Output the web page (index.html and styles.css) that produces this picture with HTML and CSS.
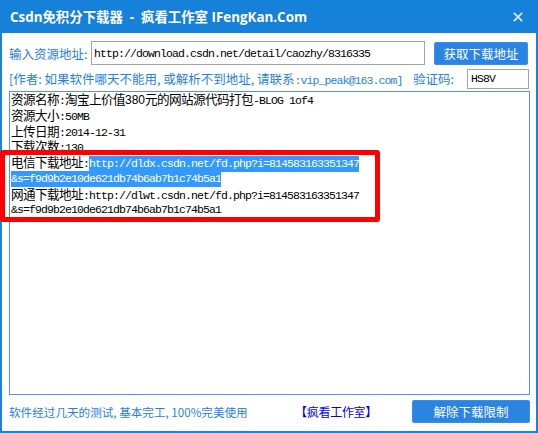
FILE: index.html
```html
<!DOCTYPE html>
<html>
<head>
<meta charset="utf-8">
<link rel="stylesheet" href="styles.css">
</head>
<body>
<div class="window">
  <div class="titlebar">
    <span class="title">Csdn免积分下载器&nbsp; - &nbsp;疯看工作室 IFengKan.Com</span>
    <svg class="close" width="10" height="10" viewBox="0 0 10 10"><path d="M0.8 0.8 L9.2 9.2 M9.2 0.8 L0.8 9.2" stroke="#dbe9f8" stroke-width="1.7" fill="none"/></svg>
  </div>
  <div class="content">
    <div class="row1">
      <span class="label">输入资源地址:</span>
      <div class="input url">http://download.csdn.net/detail/caozhy/8316335</div>
      <button class="btn get">获取下载地址</button>
    </div>
    <div class="row2">
      <span class="author">[作者: 如果软件哪天不能用, 或解析不到地址, 请联系<span class="mono">:vip_peak@163.com]</span></span>
      <span class="vlabel">验证码:</span>
      <div class="input code">HS8V</div>
    </div>
    <div class="textarea">
      <div class="line"><span class="c">资源名称</span><span>:</span><span class="c">淘宝上价值</span><span class="num">380</span><span class="c">元的网站源代码打包</span><span>-BLOG 1of4</span></div>
      <div class="line"><span class="c">资源大小</span><span>:50MB</span></div>
      <div class="line"><span class="c">上传日期</span><span>:2014-12-31</span></div>
      <div class="line"><span class="c">下载次数</span><span>:130</span></div>
      <div class="line"><span class="c">电信下载地址</span><span>:</span><span class="sel">http://dldx.csdn.net/fd.php?i=814583163351347</span></div>
      <div class="line"><span class="sel">&amp;s=f9d9b2e10de621db74b6ab7b1c74b5a1</span></div>
      <div class="line"><span class="c">网通下载地址</span><span>:http://dlwt.csdn.net/fd.php?i=814583163351347</span></div>
      <div class="line"><span>&amp;s=f9d9b2e10de621db74b6ab7b1c74b5a1</span></div>
    </div>
    <div class="footer">
      <span class="tip">软件经过几天的测试, 基本完工, 100%完美使用</span>
      <span class="studio">【疯看工作室】</span>
      <button class="btn unlock">解除下载限制</button>
    </div>
  </div>
  <div class="redbox"></div>
</div>
</body>
</html>
```

FILE: styles.css
```css
html, body {
  margin: 0;
  padding: 0;
  background: #ffffff;
}

.window {
  position: relative;
  width: 538px;
  height: 433px;
  display: flex;
  flex-direction: column;
  font-family: "Noto Sans CJK SC", sans-serif;
}

.titlebar {
  height: 33px;
  background: #1681d8;
  display: flex;
  align-items: center;
  justify-content: space-between;
  padding: 0 15px 0 10px;
  box-sizing: border-box;
  flex: none;
}

.title {
  color: #ffffff;
  font-family: "Open Sans", "Noto Sans CJK SC", sans-serif;
  font-weight: bold;
  font-size: 13.4px;
  line-height: 16px;
  white-space: pre;
}

.close {
  display: block;
}

.content {
  flex: 1;
  border: 2px solid #1d82dc;
  border-top: none;
  padding: 8px 6px 0 7px;
  display: flex;
  flex-direction: column;
}

.row1 {
  display: flex;
  align-items: center;
  height: 24px;
}

.label, .author, .vlabel, .tip {
  color: #1f80e6;
  font-size: 12.5px;
  white-space: pre;
}

.label {
  width: 82px;
}

.input {
  box-sizing: border-box;
  border: 1px solid #a3a3a3;
  background: #fff;
  font-family: "Liberation Mono", monospace;
  font-size: 11.5px;
  letter-spacing: -0.9px;
  color: #000;
  white-space: pre;
  display: flex;
  align-items: center;
}

.url {
  width: 334px;
  height: 24px;
  padding-left: 2px;
}

.btn {
  border: none;
  border-radius: 3px;
  background: #2a85e2;
  color: #ffffff;
  font-family: "Noto Sans CJK SC", sans-serif;
  font-size: 12.5px;
  padding: 0;
  box-shadow: inset 0 0 0 1px #3a8fe6;
}

.get {
  width: 94px;
  height: 23px;
  margin-left: 9px;
}

.row2 {
  display: flex;
  align-items: center;
  height: 19px;
  margin-top: 4px;
}

.mono {
  font-family: "Liberation Mono", monospace;
  font-size: 11.5px;
  letter-spacing: -0.9px;
}

.vlabel {
  margin-left: auto;
  width: 54px;
}

.code {
  width: 62px;
  height: 20px;
  padding-left: 3px;
  margin-right: 1px;
}

.textarea {
  margin-top: 3px;
  height: 304px;
  box-sizing: border-box;
  border: 1px solid #4f97e2;
  padding: 0 0 0 1px;
  font-family: "Liberation Mono", monospace;
  font-size: 11.5px;
  letter-spacing: -0.9px;
  color: #000;
}

.line {
  height: 15.75px;
  display: flex;
  align-items: baseline;
  white-space: pre;
}

.line > span {
  line-height: 15.75px;
}

.line > .c {
  font-family: "Noto Sans CJK SC", sans-serif;
  font-size: 12.6px;
  letter-spacing: -0.6px;
  line-height: 14px;
}

.num {
  font-family: "Liberation Sans", sans-serif;
  font-size: 12px;
  letter-spacing: 0;
}

.line > .sel {
  background: #3399ff;
  color: #ffffff;
  line-height: 16px;
  height: 16px;
}

.footer {
  display: flex;
  align-items: center;
  height: 23px;
  margin-top: 5px;
}

.tip {
  flex: 1;
  font-size: 11.6px;
}

.studio {
  color: #0000ee;
  font-size: 12px;
  margin-right: 35px;
  letter-spacing: -0.3px;
}

.unlock {
  width: 118px;
  height: 23px;
}

.redbox {
  position: absolute;
  left: 0;
  top: 150px;
  width: 380px;
  height: 72px;
  box-sizing: border-box;
  border: 5px solid #ff0000;
  border-radius: 3px;
}
```
